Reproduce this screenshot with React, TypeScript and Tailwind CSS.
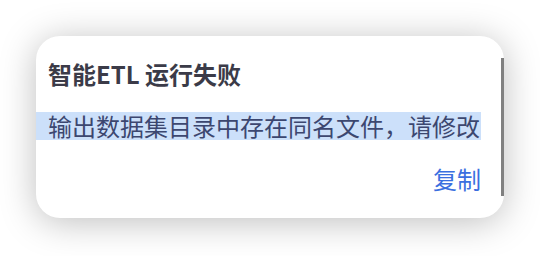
export default function App() {
  return (
    <div className="w-[540px] h-[256px] bg-white pt-[36px] pl-[36px]" style={{ fontFamily: '"Noto Sans CJK SC", "Noto Sans", sans-serif' }}>
      <div className="relative w-[468px] h-[182px] bg-white rounded-[24px] shadow-[0_4px_36px_rgba(0,0,0,0.26)] flex flex-col">
        <div className="absolute right-0 top-[22px] bottom-[22px] w-[3px] bg-[#808080]" />
        <div className="pl-[12px] pt-[22px] text-[24px] leading-[32px] font-bold text-[#3b3b48]">智能ETL 运行失败</div>
        <div className="mt-[22px] w-[445px] h-[28px] bg-[#cce0fa] pl-[12px] text-[24px] leading-[28px] text-[#3c4770] whitespace-nowrap">输出数据集目录中存在同名文件，请修改</div>
        <div className="mt-[24px] w-[445px] flex justify-end text-[24px] leading-[30px] text-[#3a6fe0]">复制</div>
      </div>
    </div>
  );
}
